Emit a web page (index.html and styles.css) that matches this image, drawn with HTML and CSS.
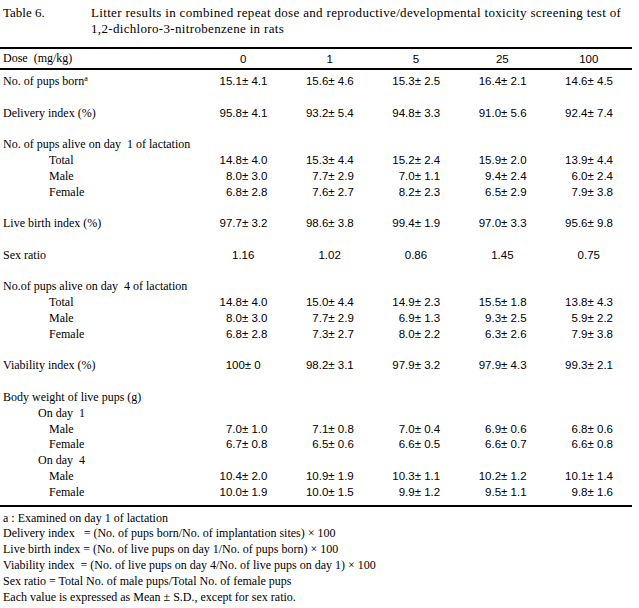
FILE: index.html
```html
<!DOCTYPE html>
<html>
<head>
<meta charset="utf-8">
<link rel="stylesheet" href="styles.css">
</head>
<body>
<div class="page">
  <div class="title">
    <div class="title-no">Table 6.</div>
    <div class="title-text">Litter results in combined repeat dose and reproductive/developmental toxicity screening test of<br>1,2-dichloro-3-nitrobenzene in rats</div>
  </div>
  <table class="data">
    <colgroup>
      <col class="c-label"><col class="c-val"><col class="c-val"><col class="c-val"><col class="c-val"><col class="c-val">
    </colgroup>
    <thead>
      <tr><th class="lab">Dose&nbsp; (mg/kg)</th><th>0</th><th>1</th><th>5</th><th>25</th><th>100</th></tr>
    </thead>
    <tbody>
      <tr class="first"><td class="lab">No. of pups born<sup>a</sup></td><td>15.1± 4.1</td><td>15.6± 4.6</td><td>15.3± 2.5</td><td>16.4± 2.1</td><td>14.6± 4.5</td></tr>
      <tr class="gap"><td colspan="6"></td></tr>
      <tr><td class="lab">Delivery index (%)</td><td>95.8± 4.1</td><td>93.2± 5.4</td><td>94.8± 3.3</td><td>91.0± 5.6</td><td>92.4± 7.4</td></tr>
      <tr class="gap"><td colspan="6"></td></tr>
      <tr><td class="lab" colspan="6">No. of pups alive on day&nbsp; 1 of lactation</td></tr>
      <tr><td class="lab ind2">Total</td><td>14.8± 4.0</td><td>15.3± 4.4</td><td>15.2± 2.4</td><td>15.9± 2.0</td><td>13.9± 4.4</td></tr>
      <tr><td class="lab ind2">Male</td><td>8.0± 3.0</td><td>7.7± 2.9</td><td>7.0± 1.1</td><td>9.4± 2.4</td><td>6.0± 2.4</td></tr>
      <tr><td class="lab ind2">Female</td><td>6.8± 2.8</td><td>7.6± 2.7</td><td>8.2± 2.3</td><td>6.5± 2.9</td><td>7.9± 3.8</td></tr>
      <tr class="gap"><td colspan="6"></td></tr>
      <tr><td class="lab">Live birth index (%)</td><td>97.7± 3.2</td><td>98.6± 3.8</td><td>99.4± 1.9</td><td>97.0± 3.3</td><td>95.6± 9.8</td></tr>
      <tr class="gap"><td colspan="6"></td></tr>
      <tr><td class="lab">Sex ratio</td><td class="ctr">1.16</td><td class="ctr">1.02</td><td class="ctr">0.86</td><td class="ctr">1.45</td><td class="ctr">0.75</td></tr>
      <tr class="gap"><td colspan="6"></td></tr>
      <tr><td class="lab" colspan="6">No.of pups alive on day&nbsp; 4 of lactation</td></tr>
      <tr><td class="lab ind2">Total</td><td>14.8± 4.0</td><td>15.0± 4.4</td><td>14.9± 2.3</td><td>15.5± 1.8</td><td>13.8± 4.3</td></tr>
      <tr><td class="lab ind2">Male</td><td>8.0± 3.0</td><td>7.7± 2.9</td><td>6.9± 1.3</td><td>9.3± 2.5</td><td>5.9± 2.2</td></tr>
      <tr><td class="lab ind2">Female</td><td>6.8± 2.8</td><td>7.3± 2.7</td><td>8.0± 2.2</td><td>6.3± 2.6</td><td>7.9± 3.8</td></tr>
      <tr class="gap"><td colspan="6"></td></tr>
      <tr><td class="lab">Viability index (%)</td><td class="ctr">100± 0</td><td>98.2± 3.1</td><td>97.9± 3.2</td><td>97.9± 4.3</td><td>99.3± 2.1</td></tr>
      <tr class="gap"><td colspan="6"></td></tr>
      <tr><td class="lab" colspan="6">Body weight of live pups (g)</td></tr>
      <tr><td class="lab ind1" colspan="6">On day&nbsp; 1</td></tr>
      <tr><td class="lab ind2">Male</td><td>7.0± 1.0</td><td>7.1± 0.8</td><td>7.0± 0.4</td><td>6.9± 0.6</td><td>6.8± 0.6</td></tr>
      <tr><td class="lab ind2">Female</td><td>6.7± 0.8</td><td>6.5± 0.6</td><td>6.6± 0.5</td><td>6.6± 0.7</td><td>6.6± 0.8</td></tr>
      <tr><td class="lab ind1" colspan="6">On day&nbsp; 4</td></tr>
      <tr><td class="lab ind2">Male</td><td>10.4± 2.0</td><td>10.9± 1.9</td><td>10.3± 1.1</td><td>10.2± 1.2</td><td>10.1± 1.4</td></tr>
      <tr class="last"><td class="lab ind2">Female</td><td>10.0± 1.9</td><td>10.0± 1.5</td><td>9.9± 1.2</td><td>9.5± 1.1</td><td>9.8± 1.6</td></tr>
    </tbody>
  </table>
  <div class="notes">
    <div>a : Examined on day 1 of lactation</div>
    <div>Delivery index&nbsp;&nbsp; = (No. of pups born/No. of implantation sites) × 100</div>
    <div>Live birth index = (No. of live pups on day 1/No. of pups born) × 100</div>
    <div>Viability index&nbsp; = (No. of live pups on day 4/No. of live pups on day 1) × 100</div>
    <div>Sex ratio = Total No. of male pups/Total No. of female pups</div>
    <div>Each value is expressed as Mean ± S.D., except for sex ratio.</div>
  </div>
</div>
</body>
</html>
```
FILE: styles.css
```css
html, body {
  margin: 0;
  padding: 0;
  background: #fff;
  color: #000;
}
.page {
  width: 633px;
  font-family: "Liberation Serif", "Times New Roman", serif;
  font-size: 12px;
}
.title {
  display: flex;
  padding-top: 5px;
  line-height: 16px;
  font-size: 13px;
}
.title-no {
  width: 88px;
  padding-left: 3px;
  flex: none;
}
.title-text {
  flex: 1;
  letter-spacing: 0.33px;
  white-space: nowrap;
}
.data {
  margin-top: 10px;
  width: 632px;
  border-collapse: collapse;
  table-layout: fixed;
}
.c-label { width: 200px; }
.c-val { width: 86.4px; }
.data th {
  font-weight: normal;
  text-align: center;
  font-family: "Liberation Sans", Arial, sans-serif;
  font-size: 11.5px;
  height: 19px;
  padding: 0;
  border-top: 2px solid #000;
  border-bottom: 2px solid #000;
}
.data th.lab {
  text-align: left;
  padding-left: 3px;
  font-family: "Liberation Serif", "Times New Roman", serif;
  font-size: 12px;
}
.data td {
  height: 15.8px;
  line-height: 15.8px;
  padding: 0 19px 0 0;
  text-align: right;
  font-family: "Liberation Sans", Arial, sans-serif;
  font-size: 11.5px;
  white-space: nowrap;
}
.data td.lab {
  text-align: left;
  padding: 0 0 0 3px;
  font-family: "Liberation Serif", "Times New Roman", serif;
  font-size: 12px;
}
.data td.ind1 { padding-left: 38px; }
.data td.ind2 { padding-left: 49px; }
.data td.ctr {
  text-align: center;
  padding: 0;
}
.data tr.first td { padding-top: 4px; }
.data tr.last td {
  padding-bottom: 4px;
  border-bottom: 2px solid #000;
}
.data tr.gap td { padding: 0; }
sup {
  font-size: 8px;
  line-height: 0;
  vertical-align: 4px;
}
.notes {
  padding-top: 4px;
  padding-left: 3px;
  line-height: 15.8px;
  font-size: 12px;
}
```
